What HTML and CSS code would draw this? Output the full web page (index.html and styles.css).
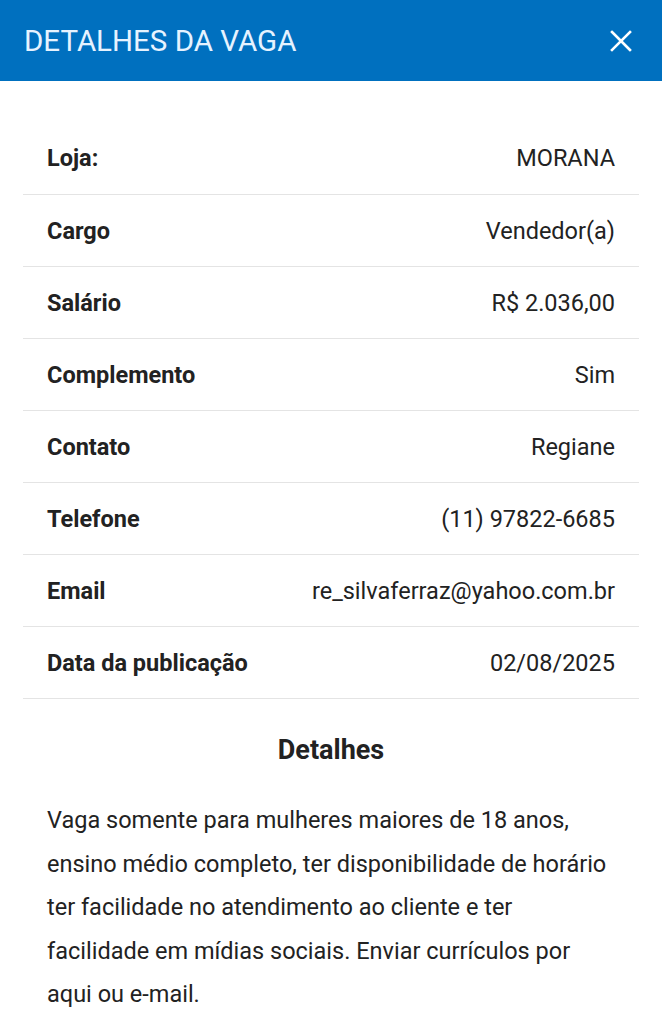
FILE: index.html
```html
<!DOCTYPE html>
<html lang="pt-BR">
<head>
    <meta charset="UTF-8" />
    <meta name="viewport" content="width=device-width, initial-scale=1.0"/>
    <title>Detalhes da vaga</title>
    <link rel="stylesheet" href="styles.css">
</head>
<body>
<header class="topbar">
    <h1 class="topbar-title">DETALHES DA VAGA</h1>
    <button class="close-btn" aria-label="Fechar">
        <svg width="22" height="22" viewBox="0 0 22 22"><path d="M2 2L20 20M20 2L2 20" stroke="#fff" stroke-width="2.6" stroke-linecap="square"/></svg>
    </button>
</header>

<main class="content">
    <table class="info">
        <tr><th>Loja:</th><td>MORANA</td></tr>
        <tr><th>Cargo</th><td>Vendedor(a)</td></tr>
        <tr><th>Salário</th><td>R$ 2.036,00</td></tr>
        <tr><th>Complemento</th><td>Sim</td></tr>
        <tr><th>Contato</th><td>Regiane</td></tr>
        <tr><th>Telefone</th><td>(11) 97822-6685</td></tr>
        <tr><th>Email</th><td>re_silvaferraz@yahoo.com.br</td></tr>
        <tr><th>Data da publicação</th><td>02/08/2025</td></tr>
    </table>

    <h2 class="section-title">Detalhes</h2>
    <p class="desc">Vaga somente para mulheres maiores de 18 anos, ensino médio completo, ter disponibilidade de horário ter facilidade no atendimento ao cliente e ter facilidade em mídias sociais. Enviar currículos por aqui ou e-mail.</p>
</main>
</body>
</html>
```

FILE: styles.css
```css
body{margin:0;font-family:Roboto,"Liberation Sans",sans-serif;color:#222;background:#fff;}
.topbar{height:81px;background:#0070bf;display:flex;align-items:center;justify-content:space-between;padding:0 30px 0 24px;box-sizing:border-box;}
.topbar-title{margin:0;font-size:29.5px;font-weight:400;color:#e6f3ff;}
.close-btn{background:none;border:0;padding:0;display:flex;cursor:pointer;}
.content{padding:41px 23px 0 23px;}
.info{width:100%;border-collapse:collapse;}
.info th,.info td{height:71px;padding:0 24px;font-size:23.5px;border-bottom:1.5px solid #e4e4e4;}
.info th{text-align:left;font-weight:700;}
.info td{text-align:right;font-weight:400;}
.info tr:first-child th,.info tr:first-child td{height:72px;}
.section-title{text-align:center;font-size:27px;font-weight:700;margin:35px 0 33px;}
.desc{margin:0;padding:0 24px;font-size:23.5px;line-height:43.5px;}
```
